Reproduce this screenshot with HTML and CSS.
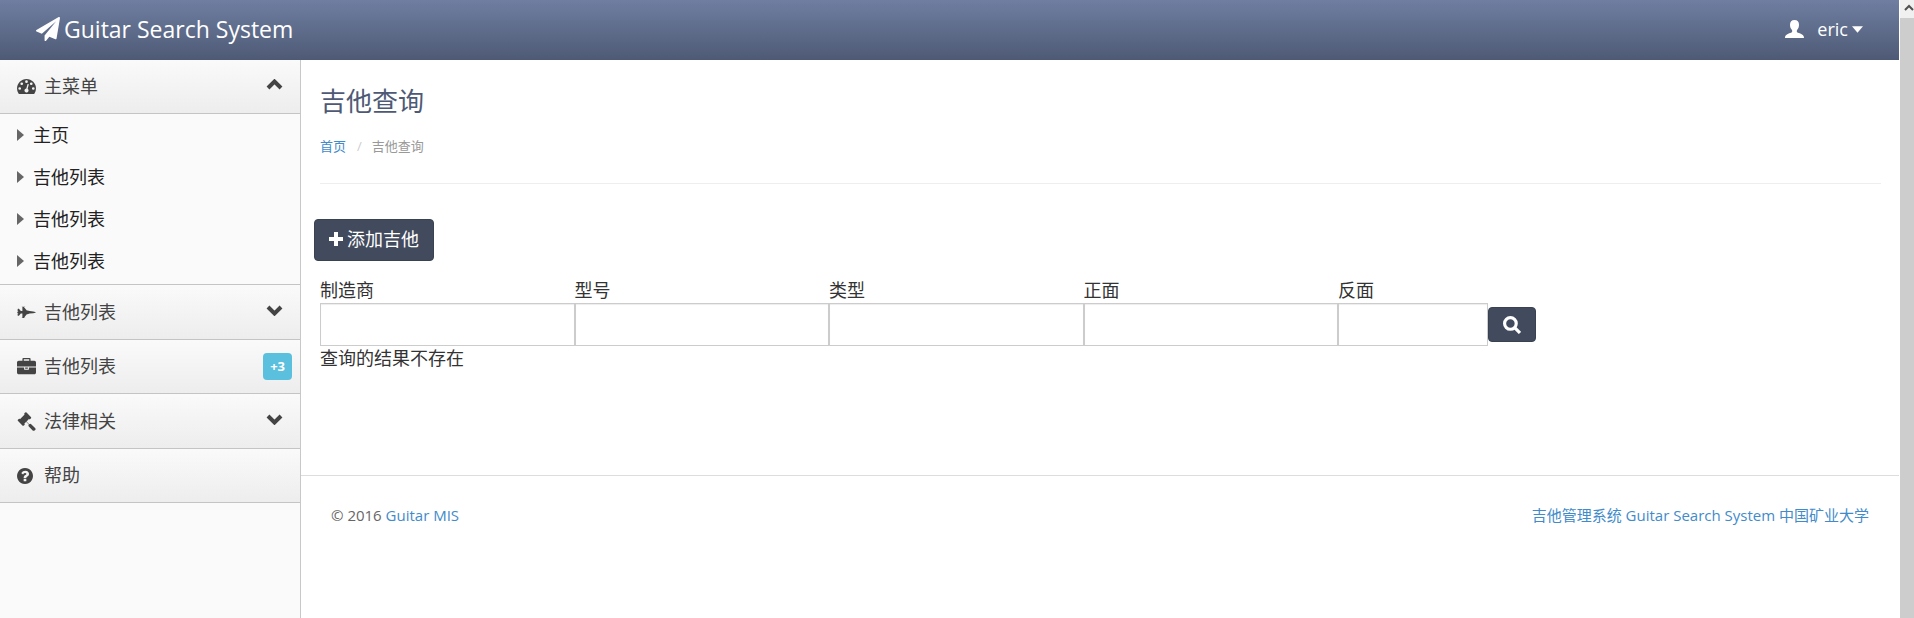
FILE: index.html
```html
<!DOCTYPE html>
<html lang="zh">
<head>
<meta charset="utf-8">
<title>Guitar Search System</title>
<link rel="stylesheet" href="styles.css">
</head>
<body>
<div class="app">
  <header class="topbar">
    <a class="brand" href="#">
      <svg class="icon-plane" viewBox="0 0 1792 1792"><path d="M1764 11q33 24 27 64l-256 1536q-5 29-32 45-14 8-31 8-11 0-24-5l-453-185-242 295q-18 23-49 23-13 0-22-4-19-7-30.500-23.500t-11.500-36.500v-349l864-1059-1069 925-395-162q-37-14-40-55-2-40 32-59l1664-960q15-9 32-9 20 0 36 11z"/></svg>
      <span>Guitar Search System</span>
    </a>
    <button class="user" type="button">
      <svg class="icon-user" viewBox="0 0 19 18"><path d="M9.500 0C6.500 0 5 1.900 5 4.800c0 1.800.5 3.600 1.600 4.800.6.700.7 1.200.6 1.900-.1.800-.9 1.200-2 1.600C2.500 14 0 15 0 18h19c0-3-2.500-4-5.200-4.900-1.100-.4-1.900-.8-2-1.600-.1-.7 0-1.200.6-1.900C13.500 8.400 14 6.600 14 4.800 14 1.900 12.500 0 9.500 0z"/></svg>
      <span>eric</span>
      <svg class="icon-caret" viewBox="0 0 12 7"><path d="M0 0h12L6 7z"/></svg>
    </button>
  </header>
  <div class="body">
    <nav class="sidebar">
      <button class="section" type="button">
        <span class="icon"><svg class="w19" viewBox="0 0 1792 1408"><path fill-rule="evenodd" d="M384 896a128 128 0 1 0-256 0 128 128 0 1 0 256 0zM576 448a128 128 0 1 0-256 0 128 128 0 1 0 256 0zM1004 929l101-382q6-26-7.500-48.500T1059 469t-48 6.500T981 514L880 896q-60 5-107 43.500T710 1038q-20 77 20 146t117 89 146-20 89-117q16-60-6-117t-72-90zM1664 896a128 128 0 1 0-256 0 128 128 0 1 0 256 0zM1024 256a128 128 0 1 0-256 0 128 128 0 1 0 256 0zM1472 448a128 128 0 1 0-256 0 128 128 0 1 0 256 0zM1792 896q0 261-141 483-19 29-54 29H195q-35 0-54-29Q0 1158 0 896q0-182 71-348t191-286T548 71 896 0t348 71 286 191 191 286 71 348z"/></svg></span>
        <span class="label">主菜单</span>
        <svg class="chevron" viewBox="0 0 17 11"><path d="M2 9l6.500-6.500L15 9"/></svg>
      </button>
      <ul class="submenu">
        <li><a href="#"><svg class="tri" viewBox="0 0 7 12"><path d="M0 0l7 6-7 6z"/></svg>主页</a></li>
        <li><a href="#"><svg class="tri" viewBox="0 0 7 12"><path d="M0 0l7 6-7 6z"/></svg>吉他列表</a></li>
        <li><a href="#"><svg class="tri" viewBox="0 0 7 12"><path d="M0 0l7 6-7 6z"/></svg>吉他列表</a></li>
        <li><a href="#"><svg class="tri" viewBox="0 0 7 12"><path d="M0 0l7 6-7 6z"/></svg>吉他列表</a></li>
      </ul>
      <button class="section collapsed" type="button">
        <span class="icon"><svg class="w19" viewBox="0 0 1920 1280"><path d="M1920 640q-1 32-288 96l-352 32-224 64h-64l-293 352h69q26 0 45 4.500t19 11.500-19 11.500-45 4.500H480v-32h64V768H384l-192 224H96l-32-32V768h32v-32h128v-8L32 704V576l192-24v-8H96v-32H64V320l32-32h96l192 224h160V96h-64V64h288q26 0 45 4.500T832 80t-19 11.500-45 4.500h-69l293 352h64l224 64 352 32q128 28 200 52t80 34z"/></svg></span>
        <span class="label">吉他列表</span>
        <svg class="chevron" viewBox="0 0 17 11"><path d="M2 2l6.500 6.500L15 2"/></svg>
      </button>
      <a class="section" href="#">
        <span class="icon"><svg class="w19" viewBox="0 0 1792 1536"><path fill-rule="evenodd" d="M640 256h512V128H640v128zM1792 896v480q0 66-47 113t-113 47H160q-66 0-113-47T0 1376V896h672v160q0 26 19 45t45 19h320q26 0 45-19t19-45V896h672zM1024 896v128H768V896h256zM1792 416v384H0V416q0-66 47-113t113-47h352V96q0-40 28-68t68-28h576q40 0 68 28t28 68v160h352q66 0 113 47t47 113z"/></svg></span>
        <span class="label">吉他列表</span>
        <span class="badge">+3</span>
      </a>
      <button class="section collapsed" type="button">
        <span class="icon"><svg class="w19" viewBox="0 0 1792 1792"><path d="M1771 1536q0 53-37 90l-107 108q-39 37-91 37-53 0-90-37l-363-364q-38-36-38-90 0-53 43-96L832 928l-126 126q-14 14-34 14t-34-14q2 2 12.500 12t12.500 13 10 11.500 10 13.500 6 13.500 5.500 16.500 1.500 18q0 38-28 68-3 3-16.500 18t-19 20.500-18.500 16.500-22 15.500-22 9-26 4.500q-40 0-68-28L68 858q-28-28-28-68 0-13 4.500-26t9-22T69 720t16.500-18.500 20.500-19T124 666q30-28 68-28 10 0 18 1.500t16.500 5.500 13.500 6 13.500 10 11.500 10 13 12.500 12 12.500q-14-14-14-34t14-34l348-348q14-14 34-14t34 14q-2-2-12.500-12T681 255t-10-11.500-10-13.500-6-13.500-5.500-16.500-1.500-18q0-38 28-68 3-3 16.500-18t19-20.500T730 59t22-15.500 22-9 26-4.500q40 0 68 28l408 408q28 28 28 68 0 13-4.500 26t-9 22-15.500 22-16.500 18.500-20.500 19-18 16.500q-30 28-68 28-10 0-18-1.500t-16.500-5.500-13.500-6-13.500-10-11.500-10-13-12.500-12-12.500q14 14 14 34t-14 34L864 896l256 256q43-43 96-43 52 0 91 37l363 363q37 39 37 91z" transform="translate(32 0)"/></svg></span>
        <span class="label">法律相关</span>
        <svg class="chevron" viewBox="0 0 17 11"><path d="M2 2l6.500 6.500L15 2"/></svg>
      </button>
      <a class="section" href="#">
        <span class="icon"><svg class="w16" viewBox="0 0 1536 1536"><path fill-rule="evenodd" d="M896 1248v-192q0-14-9-23t-23-9H672q-14 0-23 9t-9 23v192q0 14 9 23t23 9h192q14 0 23-9t9-23zM1152 576q0-88-55.500-163T958 297t-170-41q-243 0-371 213-15 24 8 42l132 100q7 6 19 6 16 0 25-12 53-68 86-92 34-24 86-24 48 0 85.500 26t37.500 59q0 38-20 61t-68 45q-63 28-115.500 86.500T640 892v36q0 14 9 23t23 9h192q14 0 23-9t9-23q0-19 21.500-49.500T972 829q32-18 49-28.500t46-35 44.500-48 28-60.500 12.500-81zM1536 768q0 209-103 385.500T1153.500 1433 768 1536t-385.500-103T103 1153.500 0 768t103-385.500T382.500 103 768 0t385.500 103T1433 382.500 1536 768z"/></svg></span>
        <span class="label">帮助</span>
      </a>
    </nav>
    <main class="main">
      <div class="content">
        <h1 class="title">吉他查询</h1>
        <ol class="crumbs">
          <li><a href="#">首页</a></li>
          <li class="sep">/</li>
          <li>吉他查询</li>
        </ol>
        <hr class="rule">
        <button class="btn btn-add" type="button">
          <svg class="icon-plus" viewBox="0 0 14 14"><path d="M5 0h4v5h5v4H9v5H5V9H0V5h5z"/></svg>
          <span>添加吉他</span>
        </button>
        <form class="filters">
          <div class="field"><label for="maker">制造商</label><input id="maker" type="text"></div>
          <div class="field"><label for="model">型号</label><input id="model" type="text"></div>
          <div class="field"><label for="kind">类型</label><input id="kind" type="text"></div>
          <div class="field"><label for="front">正面</label><input id="front" type="text"></div>
          <div class="field">
            <label for="back">反面</label>
            <div class="search">
              <input id="back" type="text">
              <button class="btn btn-search" type="button" aria-label="search">
                <svg class="icon-search" viewBox="0 0 17 17"><circle cx="7" cy="7" r="5.500"/><path d="M11 11l5 5"/></svg>
              </button>
            </div>
          </div>
        </form>
        <p class="result">查询的结果不存在</p>
      </div>
      <footer class="footer">
        <span>© 2016 <a href="#">Guitar MIS</a></span>
        <a href="#">吉他管理系统 Guitar Search System 中国矿业大学</a>
      </footer>
    </main>
  </div>
</div>
<div class="scrollbar">
  <div class="scroll-up"><svg class="icon-up" viewBox="0 0 10 7"><path d="M1 6l4-4 4 4"/></svg></div>
</div>
</body>
</html>
```

FILE: styles.css
```css
* { box-sizing: border-box; }
body {
  margin: 0;
  min-height: 100vh;
  display: flex;
  background: #fff;
  color: #333;
  font: 18px/25px "Open Sans", "Noto Sans CJK SC", sans-serif;
  font-weight: 400;
}
a { color: #428bca; text-decoration: none; }
button, input { font: inherit; }
button { cursor: pointer; }
svg { display: block; flex: none; fill: currentColor; }
.app { flex: 1; display: flex; flex-direction: column; }

.topbar {
  height: 60px;
  padding: 0 36px 2px;
  display: flex;
  align-items: center;
  justify-content: space-between;
  color: #fff;
  background: linear-gradient(#6f7ea1, #4e5a75);
}
.brand { display: flex; align-items: center; gap: 4px; color: #fff; font-size: 23px; }
.icon-plane { width: 24px; height: 24px; }
.user {
  display: flex;
  align-items: center;
  padding: 0;
  border: 0;
  background: none;
  color: #fff;
}
.icon-user { width: 19px; height: 18px; margin-right: 13px; }
.icon-caret { width: 11px; height: 7px; margin-left: 4px; }

.body { flex: 1; display: flex; }
.sidebar {
  flex: none;
  width: 301px;
  border-right: 1px solid #c6c8ca;
  background: #fafafa;
}
.section {
  width: 100%;
  height: 54px;
  padding: 0 8px 0 17px;
  display: flex;
  align-items: center;
  border: 0;
  border-bottom: 1px solid #c4c4c4;
  background: linear-gradient(#fafafa, #ededed);
  color: #444;
  text-align: left;
}
.section.collapsed { height: 55px; }
.icon { width: 27px; flex: none; }
.w19 { width: 19px; }
.w16 { width: 16px; }
.label { flex: 1; }
.chevron {
  width: 17px;
  height: 11px;
  margin: 0 9px 4px 0;
  fill: none;
  stroke: #444;
  stroke-width: 4;
}
.badge {
  padding: 0 7px;
  border-radius: 4px;
  background: #5bc0de;
  color: #fff;
  font-size: 13px;
  font-weight: 700;
  line-height: 27px;
}
.submenu {
  margin: 0;
  padding: 0 0 2px;
  list-style: none;
  border-bottom: 1px solid #c4c4c4;
}
.submenu a {
  display: flex;
  align-items: center;
  gap: 9px;
  height: 42px;
  padding-left: 17px;
  color: #222;
}
.tri { width: 7px; height: 12px; color: #666; }

.main { flex: 1; min-width: 0; }
.content { padding: 22px 18px 0 19px; }
.title {
  margin: 0;
  color: #4e5a75;
  font-size: 26px;
  font-weight: 400;
  line-height: 38px;
}
.crumbs {
  display: flex;
  margin: 16px 0 0;
  padding: 0;
  list-style: none;
  color: #999;
  font-size: 13px;
  line-height: 20px;
}
.crumbs .sep { padding: 0 10px 0 11px; color: #ccc; }
.rule { margin: 27px 0 35px; border: 0; border-top: 1px solid #eee; }
.btn { border: 1px solid #3a4150; border-radius: 4px; background: #424a5d; color: #fff; }
.btn-add {
  display: flex;
  align-items: center;
  gap: 4px;
  height: 42px;
  margin-left: -6px;
  padding: 0 14px 2px;
}
.icon-plus { width: 14px; height: 14px; }
.filters {
  display: grid;
  grid-template-columns: repeat(6, 1fr);
  margin: 17px 34px 0 0;
}
.field label { display: block; }
.field input {
  display: block;
  width: 100%;
  height: 43px;
  padding: 6px 12px;
  border: 1px solid #ccc;
  background: #fff;
  box-shadow: inset 0 1px 1px rgba(0, 0, 0, .075);
}
.search { display: flex; align-items: center; }
.search input { flex: 0 1 150px; min-width: 0; }
.btn-search {
  flex: none;
  width: 48px;
  height: 35px;
  padding: 0;
  display: grid;
  place-items: center;
}
.icon-search { width: 18px; height: 18px; fill: none; stroke: currentColor; stroke-width: 3; }
.result { margin: 0; }
.footer {
  display: flex;
  justify-content: space-between;
  margin-top: 104px;
  padding: 27px 30px;
  border-top: 1px solid #ddd;
  color: #666;
  font-size: 15px;
}
.scrollbar { flex: none; width: 15px; border-left: 1px solid #fff; background: #cdcdcd; }
.scroll-up {
  height: 18px;
  padding: 4px 0 0 4px;
  overflow: hidden;
  background: #f0f0f0;
}
.icon-up { width: 10px; height: 7px; fill: none; stroke: #505050; stroke-width: 2; }
```
